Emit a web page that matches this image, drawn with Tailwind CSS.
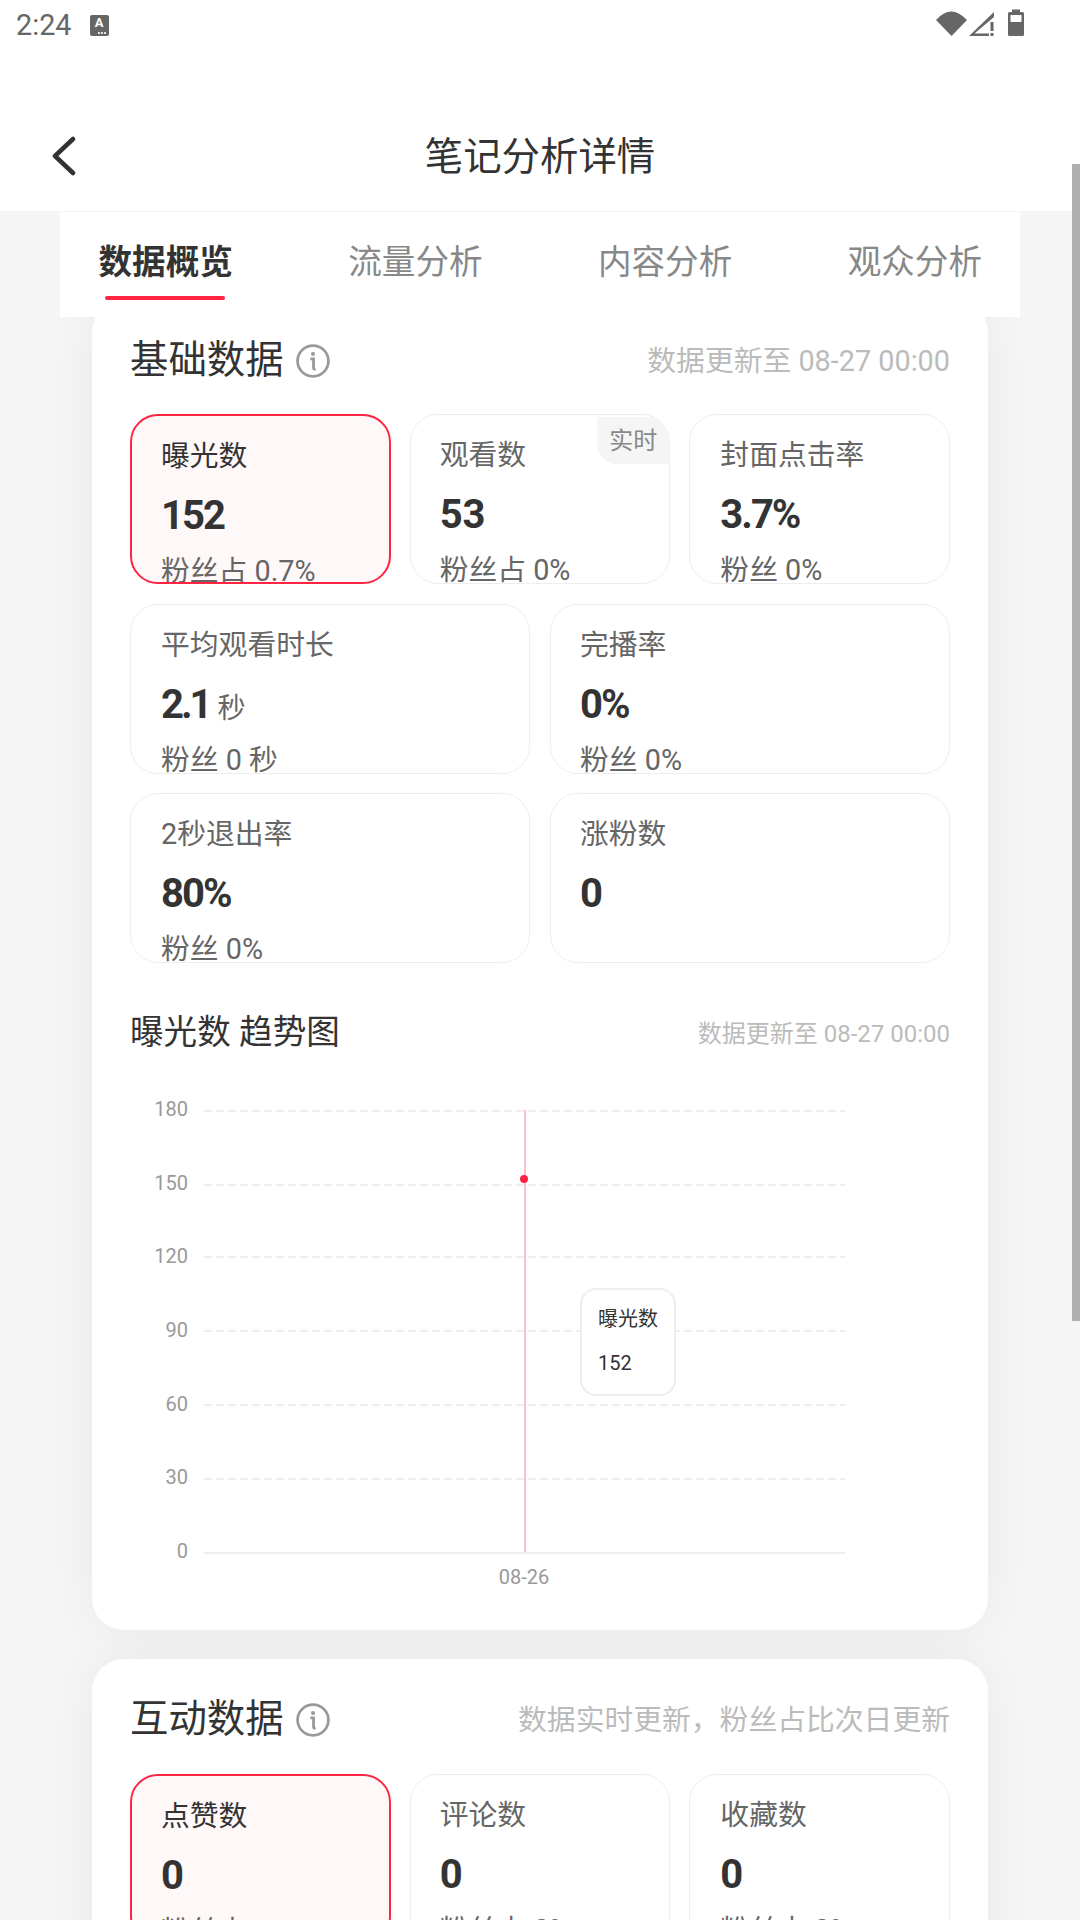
<!DOCTYPE html>
<html lang="zh-CN">
  <head>
    <meta charset="UTF-8" />
    <meta name="viewport" content="width=device-width, initial-scale=1.0" />
    <title>笔记分析详情</title>
    <script src="https://cdn.jsdelivr.net/npm/@tailwindcss/browser@4"></script>
  </head>
  <body class="relative h-[1920px] w-[1080px] overflow-hidden bg-[#f5f5f5] [font-family:Roboto,'Noto_Sans_CJK_SC',sans-serif]">
    <!-- status bar + title -->
    <header class="relative z-20 h-[211px] bg-white">
      <div class="flex h-[50px] items-center pl-4 text-[#666]">
        <span class="text-[28.8px] leading-none">2:24</span>
        <span class="relative ml-[18px] flex h-[21px] w-[19px] justify-center rounded-[2px] bg-[#666] text-[13px] leading-[16px] font-bold text-white">
          A
          <span class="absolute bottom-[2px] right-[3px] flex gap-px">
            <i class="h-[2px] w-[2px] bg-white/80"></i>
            <i class="h-[2px] w-[2px] bg-white/80"></i>
            <i class="h-[2px] w-[2px] bg-white/80"></i>
          </span>
        </span>
        <svg class="ml-auto mr-[56px] h-[50px] w-[88px]" viewBox="936 0 88 50" fill="#666">
          <path d="M936 20 Q951 3 967 20 L951.5 36 Z" />
          <path d="M969 36 L994 12 V17 L974.5 33.5 H989 V36 Z" />
          <rect x="990.5" y="22" width="3" height="9" />
          <rect x="990.5" y="33" width="3" height="3" />
          <path d="M1012 12 V9.5 H1020 V12 H1022.5 Q1024 12 1024 13.5 V34.5 Q1024 36 1022.5 36 H1009.5 Q1008 36 1008 34.5 V13.5 Q1008 12 1009.5 12 Z" />
          <rect x="1010.5" y="15" width="11" height="7" fill="#fff" />
        </svg>
      </div>
      <nav class="relative mt-[50px] flex h-[112px] items-center justify-center">
        <svg class="absolute left-[50px] top-[36px] h-[40px] w-[26px]" viewBox="0 0 26 40" fill="none" stroke="#333" stroke-width="4.5" stroke-linecap="round" stroke-linejoin="round">
          <path d="M23 3 L5 20 L23 37" />
        </svg>
        <h1 class="mt-[2px] text-[38.4px] leading-none text-[#333]">笔记分析详情</h1>
      </nav>
    </header>

    <!-- tabs -->
    <div class="relative z-10 mx-[60px] mt-px flex h-[105px] gap-[115.4px] overflow-hidden bg-white pl-[38.5px] text-[33.6px] leading-[102px] whitespace-nowrap text-[#888]">
      <div class="relative font-bold text-[#333]">
        数据概览
        <span class="absolute bottom-[17px] left-[6.5px] h-1 w-[120px] rounded-full bg-[#ff2442]"></span>
      </div>
      <div>流量分析</div>
      <div>内容分析</div>
      <div>观众分析</div>
    </div>

    <!-- basic data -->
    <section class="relative -mt-[17px] ml-[92px] h-[1330px] w-[896px] rounded-[32px] bg-white px-[38px] pt-10 shadow-[0_0_50px_rgba(0,0,0,0.05)]">
      <div class="flex h-10 items-center">
        <h2 class="text-[38.4px] leading-none text-[#333]">基础数据</h2>
        <svg class="ml-3 mt-0.5 h-[34px] w-[34px]" viewBox="0 0 32 32" fill="none" stroke="#999" stroke-width="2.6">
          <circle cx="16" cy="16" r="14.5" />
          <circle cx="16" cy="9.5" r="1.9" fill="#999" stroke="none" />
          <path d="M13.5 14 H16.5 V22.5 Q16.5 24 18.5 23.5" stroke-width="2.6" />
        </svg>
        <span class="ml-auto mt-[3px] text-[28.8px] text-[#bbb]">数据更新至 08-27 00:00</span>
      </div>

      <div class="mt-[34px] flex flex-col gap-[19.5px]">
        <div class="grid grid-cols-3 gap-x-[19px]">
          <div class="h-[170px] overflow-hidden rounded-[28px] border-2 border-[#ff2442] bg-[#fff8f8] pl-[29px] pt-5">
            <div class="text-[28.8px] leading-10 text-[#333]">曝光数</div>
            <div class="mt-[15px] text-[40px] leading-[50px] font-bold tracking-[-2px] text-[#333]">152</div>
            <div class="mt-[10px] text-[28.8px] leading-10 text-[#666]">粉丝占 0.7%</div>
          </div>
          <div class="relative h-[170px] overflow-hidden rounded-[28px] border border-[#eee] bg-white pl-[29px] pt-5">
            <span class="absolute right-0 top-0.5 flex h-[47px] w-[72px] items-center justify-center rounded-bl-[20px] bg-[#f5f5f5] text-[24px] leading-none text-[#888]">实时</span>
            <div class="text-[28.8px] leading-10 text-[#666]">观看数</div>
            <div class="mt-[15px] text-[40px] leading-[50px] font-bold text-[#333]">53</div>
            <div class="mt-[10px] text-[28.8px] leading-10 text-[#666]">粉丝占 0%</div>
          </div>
          <div class="h-[170px] overflow-hidden rounded-[28px] border border-[#eee] bg-white pl-[30px] pt-5">
            <div class="text-[28.8px] leading-10 text-[#666]">封面点击率</div>
            <div class="mt-[15px] text-[40px] leading-[50px] font-bold tracking-[-2px] text-[#333]">3.7%</div>
            <div class="mt-[10px] text-[28.8px] leading-10 text-[#666]">粉丝 0%</div>
          </div>
        </div>

        <div class="grid grid-cols-2 gap-x-5">
          <div class="h-[170px] overflow-hidden rounded-[28px] border border-[#eee] bg-white pl-[30px] pt-5">
            <div class="text-[28.8px] leading-10 text-[#666]">平均观看时长</div>
            <div class="mt-[15px] flex h-[50px] items-baseline text-[40px] leading-[50px] font-bold tracking-[-3px] text-[#333]">2.1<span class="ml-[8px] text-[28px] leading-none font-normal tracking-normal text-[#666]">秒</span></div>
            <div class="mt-[10px] text-[28.8px] leading-10 text-[#666]">粉丝 0 秒</div>
          </div>
          <div class="h-[170px] overflow-hidden rounded-[28px] border border-[#eee] bg-white pl-[29px] pt-5">
            <div class="text-[28.8px] leading-10 text-[#666]">完播率</div>
            <div class="mt-[15px] text-[40px] leading-[50px] font-bold tracking-[-2px] text-[#333]">0%</div>
            <div class="mt-[10px] text-[28.8px] leading-10 text-[#666]">粉丝 0%</div>
          </div>
        </div>

        <div class="grid grid-cols-2 gap-x-5">
          <div class="h-[170px] overflow-hidden rounded-[28px] border border-[#eee] bg-white pl-[30px] pt-5">
            <div class="text-[28.8px] leading-10 text-[#666]">2秒退出率</div>
            <div class="mt-[15px] text-[40px] leading-[50px] font-bold tracking-[-2px] text-[#333]">80%</div>
            <div class="mt-[10px] text-[28.8px] leading-10 text-[#666]">粉丝 0%</div>
          </div>
          <div class="h-[170px] overflow-hidden rounded-[28px] border border-[#eee] bg-white pl-[29px] pt-5">
            <div class="text-[28.8px] leading-10 text-[#666]">涨粉数</div>
            <div class="mt-[15px] text-[40px] leading-[50px] font-bold tracking-[-1px] text-[#333]">0</div>
          </div>
        </div>
      </div>

      <!-- trend chart -->
      <div class="mt-[49px] flex h-10 items-center">
        <h3 class="mt-[2px] text-[33.6px] leading-none text-[#333]">曝光数 趋势图</h3>
        <span class="ml-auto mt-[3px] text-[24px] text-[#bbb]">数据更新至 08-27 00:00</span>
      </div>
      <div class="relative h-[578px] w-[820px]">
        <!-- viewBox uses the page's own coordinates -->
        <svg class="h-[578px] w-[820px]" viewBox="130 1052 820 578" font-size="20" fill="#999" font-family="Roboto">
          <g stroke="#eeeeee" stroke-width="2" stroke-dasharray="8 4">
            <path d="M204 1111 H845" />
            <path d="M204 1185 H845" />
            <path d="M204 1257 H845" />
            <path d="M204 1331 H845" />
            <path d="M204 1405 H845" />
            <path d="M204 1479 H845" />
          </g>
          <path d="M204 1553 H845" stroke="#eeeeee" stroke-width="2" />
          <path d="M525 1110 V1552" stroke="#ffc0cb" stroke-width="2" />
          <circle cx="524" cy="1179" r="4" fill="#ff2442" />
          <g text-anchor="end">
            <text x="188" y="1116">180</text>
            <text x="188" y="1190">150</text>
            <text x="188" y="1263">120</text>
            <text x="188" y="1337">90</text>
            <text x="188" y="1411">60</text>
            <text x="188" y="1484">30</text>
            <text x="188" y="1558">0</text>
          </g>
          <text x="524" y="1584" text-anchor="middle">08-26</text>
        </svg>
        <div class="absolute left-[450px] top-[236px] h-[108px] w-[96px] rounded-2xl border-2 border-[#eee] bg-white pl-4 pt-[7px] text-[20px] leading-[44px] text-[#333]">
          <div>曝光数</div>
          <div>152</div>
        </div>
      </div>
    </section>

    <!-- interaction data -->
    <section class="mt-[29px] ml-[92px] w-[896px] rounded-[32px] bg-white px-[38px] pt-10 pb-10 shadow-[0_0_50px_rgba(0,0,0,0.05)]">
      <div class="flex h-10 items-center">
        <h2 class="text-[38.4px] leading-none text-[#333]">互动数据</h2>
        <svg class="ml-3 mt-0.5 h-[34px] w-[34px]" viewBox="0 0 32 32" fill="none" stroke="#999" stroke-width="2.6">
          <circle cx="16" cy="16" r="14.5" />
          <circle cx="16" cy="9.5" r="1.9" fill="#999" stroke="none" />
          <path d="M13.5 14 H16.5 V22.5 Q16.5 24 18.5 23.5" stroke-width="2.6" />
        </svg>
        <span class="ml-auto mt-[3px] text-[28.8px] text-[#bbb]">数据实时更新，粉丝占比次日更新</span>
      </div>
      <div class="mt-[35px] grid grid-cols-3 gap-x-[19px]">
        <div class="h-[170px] overflow-hidden rounded-[28px] border-2 border-[#ff2442] bg-[#fff8f8] pl-[29px] pt-5">
          <div class="text-[28.8px] leading-10 text-[#333]">点赞数</div>
          <div class="mt-[15px] text-[40px] leading-[50px] font-bold text-[#333]">0</div>
          <div class="mt-[10px] text-[28.8px] leading-10 text-[#666]">粉丝占 0%</div>
        </div>
        <div class="h-[170px] overflow-hidden rounded-[28px] border border-[#eee] bg-white pl-[29px] pt-5">
          <div class="text-[28.8px] leading-10 text-[#666]">评论数</div>
          <div class="mt-[15px] text-[40px] leading-[50px] font-bold text-[#333]">0</div>
          <div class="mt-[10px] text-[28.8px] leading-10 text-[#666]">粉丝占 0%</div>
        </div>
        <div class="h-[170px] overflow-hidden rounded-[28px] border border-[#eee] bg-white pl-[30px] pt-5">
          <div class="text-[28.8px] leading-10 text-[#666]">收藏数</div>
          <div class="mt-[15px] text-[40px] leading-[50px] font-bold text-[#333]">0</div>
          <div class="mt-[10px] text-[28.8px] leading-10 text-[#666]">粉丝占 0%</div>
        </div>
      </div>
    </section>

    <!-- scrollbar thumb -->
    <div class="absolute right-0 top-[164px] z-30 h-[1157px] w-2 bg-[#b0b0b0]"></div>
  </body>
</html>
